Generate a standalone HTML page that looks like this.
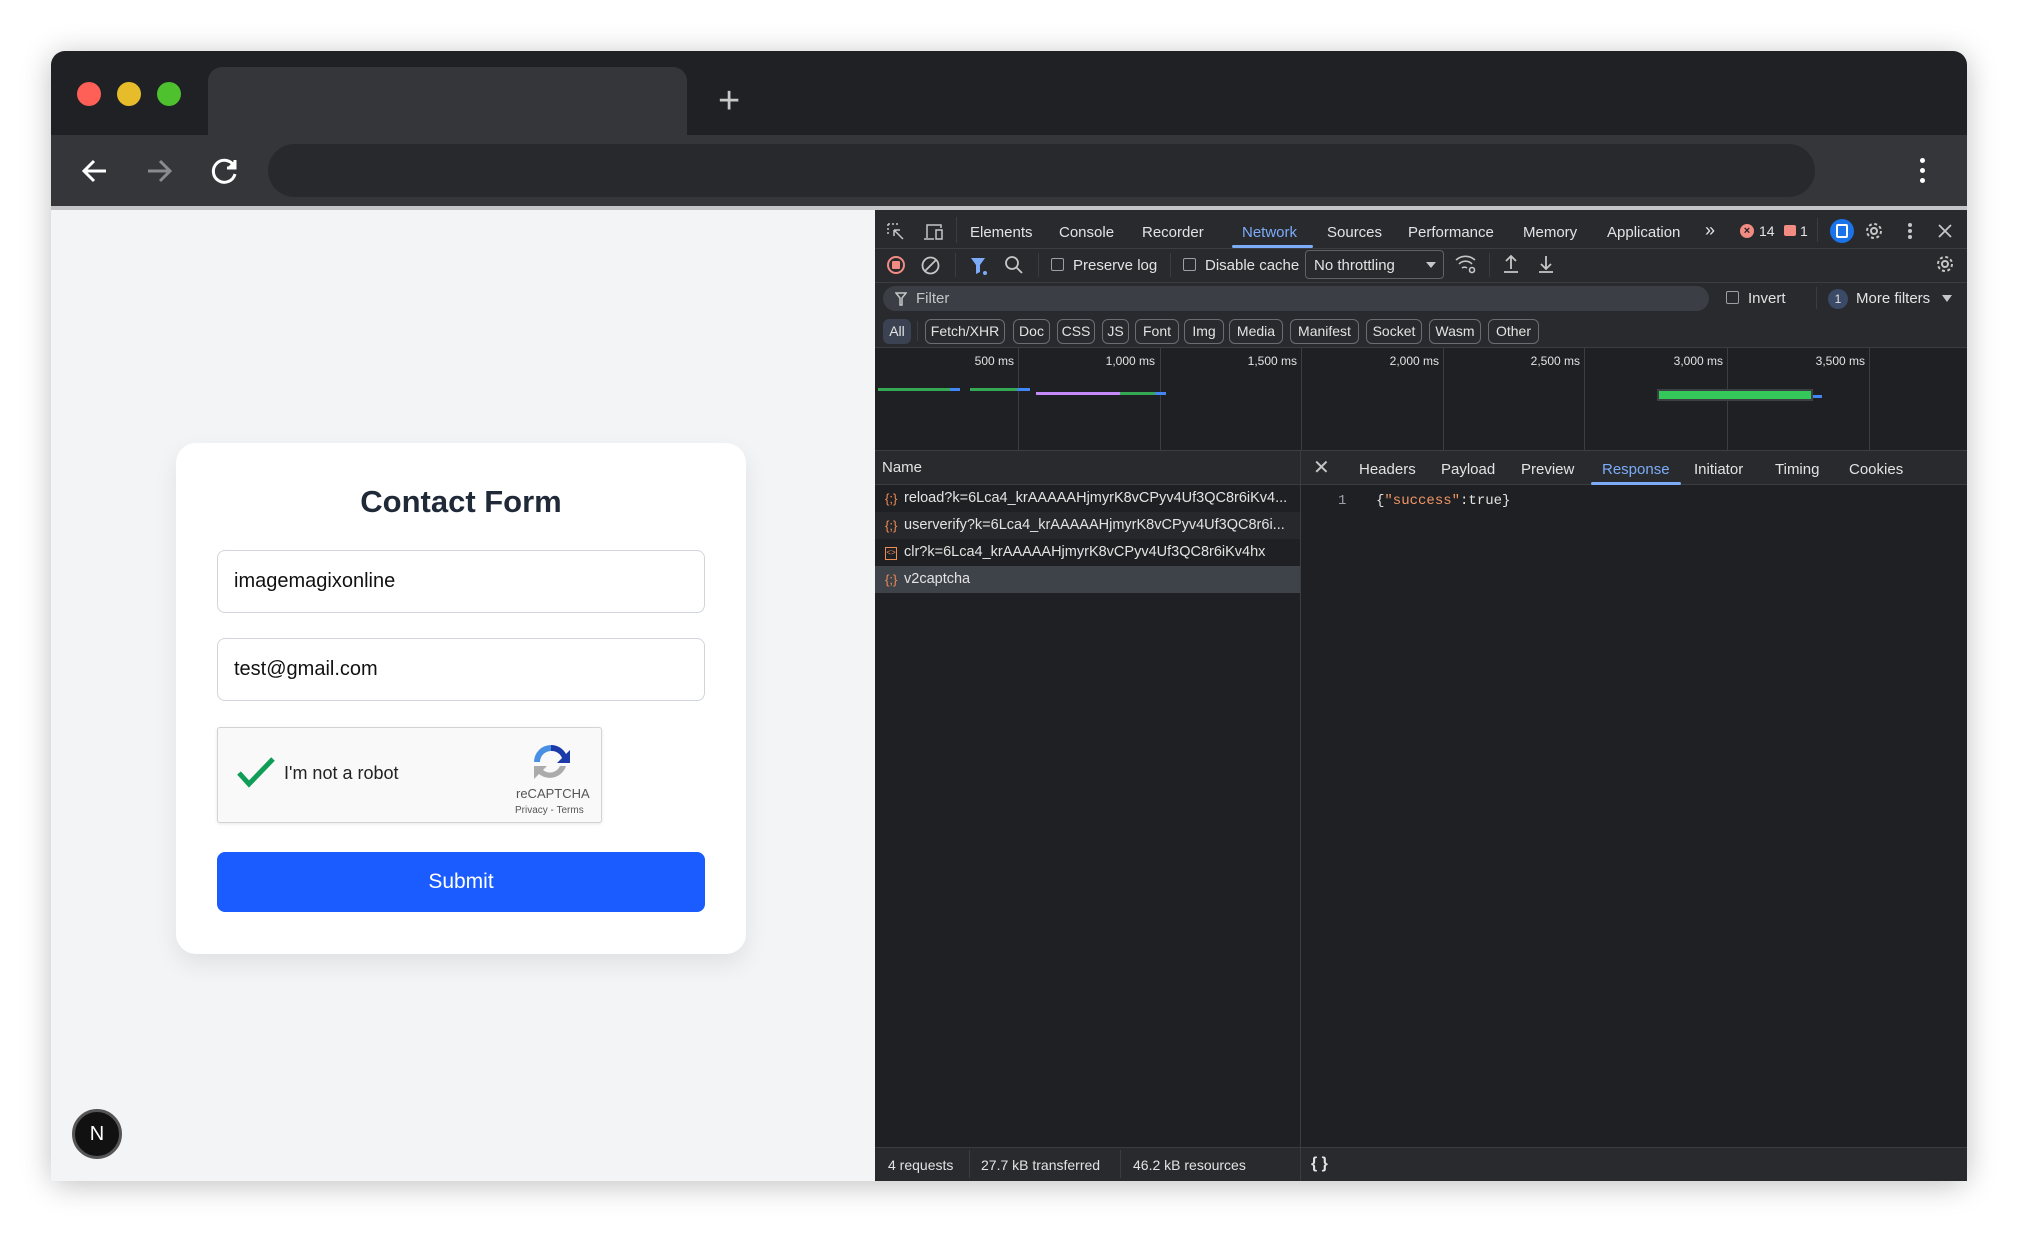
<!DOCTYPE html>
<html><head><meta charset="utf-8"><style>
*{box-sizing:border-box;margin:0;padding:0}
body{width:2018px;height:1233px;background:#fff;position:relative;overflow:hidden;font-family:"Liberation Sans",sans-serif}
.a{position:absolute}
.win{left:51px;top:51px;width:1916px;height:1130px;border-radius:14px;overflow:hidden;background:#202124;box-shadow:0 4px 30px rgba(0,0,0,.25)}
.dot{width:24px;height:24px;border-radius:50%;top:82px}
.dt{font-size:15px;color:#e3e3e3;white-space:nowrap}
.chip{top:319px;height:25px;border:1px solid #6a6d73;border-radius:6px;font-size:14px;color:#e3e3e3;text-align:center;line-height:23px}
.gl{top:347px;width:1px;height:103px;background:#3c3d41}
.tl{top:354px;font-size:12px;color:#e3e3e3;text-align:right;width:60px}
.row{left:875px;width:425px;height:27px;font-size:14.5px;color:#e3e3e3;line-height:27px;padding-left:29px;white-space:nowrap;overflow:hidden}
.ic{position:absolute;left:10px;top:0;color:#f28b54;font-size:13px}
.cb{width:13px;height:13px;border:1px solid #9aa0a6;border-radius:2px}
</style></head><body>
<div class="a win"></div>
<div class="a dot" style="left:77px;background:#fe5f57"></div>
<div class="a dot" style="left:117px;background:#e6bc2a"></div>
<div class="a dot" style="left:157px;background:#4dc22e"></div>
<div class="a" style="left:208px;top:67px;width:479px;height:70px;background:#35363a;border-radius:14px 14px 0 0"></div>
<div class="a" style="left:718px;top:82px;color:#c8c8c8;font-size:38px;line-height:38px">+</div>
<div class="a" style="left:51px;top:135px;width:1916px;height:73px;background:#35363a"></div>
<svg class="a" style="left:80px;top:156px" width="30" height="30" viewBox="0 0 30 30" fill="none" stroke="#fff" stroke-width="3"><path d="M26 15H4M14 5L4 15l10 10"/></svg>
<svg class="a" style="left:144px;top:156px" width="30" height="30" viewBox="0 0 30 30" fill="none" stroke="#8a8b8e" stroke-width="3"><path d="M4 15h22M16 5l10 10-10 10"/></svg>
<svg class="a" style="left:210px;top:156px" width="30" height="30" viewBox="0 0 30 30" fill="none" stroke="#fff" stroke-width="3"><path d="M24 10A11 11 0 1 0 25 18"/><path d="M25 4v8h-8" fill="#fff"/></svg>
<div class="a" style="left:268px;top:144px;width:1547px;height:53px;background:#28292c;border-radius:27px"></div>
<div class="a" style="left:1920px;top:158px;width:5px;height:5px;background:#fff;border-radius:50%;box-shadow:0 10px 0 #fff,0 20px 0 #fff"></div>
<div class="a" style="left:51px;top:206px;width:1916px;height:4px;background:#c4c4c6"></div>
<div class="a" style="left:51px;top:210px;width:824px;height:971px;background:#f3f4f6"></div>
<div class="a" style="left:176px;top:443px;width:570px;height:511px;background:#fff;border-radius:20px;box-shadow:0 10px 24px rgba(0,0,0,.08)"></div>
<div class="a" style="left:176px;top:484px;width:570px;text-align:center;font-size:31px;font-weight:bold;color:#1f2937">Contact Form</div>
<div class="a" style="left:217px;top:550px;width:488px;height:63px;border:1px solid #d1d5db;border-radius:8px;font-size:20px;color:#111;padding-left:16px;line-height:61px">imagemagixonline</div>
<div class="a" style="left:217px;top:638px;width:488px;height:63px;border:1px solid #d1d5db;border-radius:8px;font-size:20px;color:#111;padding-left:16px;line-height:61px">test@gmail.com</div>
<div class="a" style="left:217px;top:727px;width:385px;height:96px;border:1px solid #d3d3d3;border-radius:3px;background:#f9f9f9;box-shadow:0 1px 3px rgba(0,0,0,.1)"></div>
<svg class="a" style="left:236px;top:756px" width="40" height="32" viewBox="0 0 40 32" fill="none" stroke="#0f9d58" stroke-width="5"><path d="M3 17l10 11L37 3"/></svg>
<div class="a" style="left:284px;top:763px;font-size:18px;color:#222">I'm not a robot</div>
<svg class="a" style="left:531px;top:742px" width="40" height="40" viewBox="0 0 40 40"><path d="M20 3a17 17 0 0 1 15 9l4-4v13H26l5-5A11 11 0 0 0 20 9z" fill="#1c3aa9"/><path d="M20 3A17 17 0 0 0 3 20h6A11 11 0 0 1 20 9z" fill="#4a90e2"/><path d="M3 20v17l5-5a17 17 0 0 0 27-8h-6a11 11 0 0 1-17 4l4-4H3z" fill="#ababab"/></svg>
<div class="a" style="left:516px;top:786px;font-size:13px;color:#555">reCAPTCHA</div>
<div class="a" style="left:515px;top:805px;font-size:10px;color:#555">Privacy - Terms</div>
<div class="a" style="left:217px;top:852px;width:488px;height:60px;background:#1a5cff;border-radius:8px;color:#fff;font-size:21px;text-align:center;line-height:60px">Submit</div>
<div class="a" style="left:72px;top:1109px;width:50px;height:50px;border-radius:50%;background:#111;border:3px solid #555;color:#fff;font-size:20px;text-align:center;line-height:44px">N</div>
<div class="a" style="left:875px;top:210px;width:1092px;height:971px;background:#1f2023"></div>
<div class="a" style="left:875px;top:210px;width:1092px;height:137px;background:#282a2e"></div>
<div class="a" style="left:875px;top:248px;width:1092px;height:1px;background:#3c3d41"></div>
<div class="a" style="left:875px;top:282px;width:1092px;height:1px;background:#3c3d41"></div>
<div class="a" style="left:875px;top:347px;width:1092px;height:1px;background:#3c3d41"></div>
<svg class="a" style="left:886px;top:222px" width="20" height="20" viewBox="0 0 20 20" fill="none" stroke="#c4c7c5" stroke-width="1.5"><path d="M2 2h10M2 2v12" stroke-dasharray="2 2"/><path d="M8 8l9 9M8 8h6M8 8v6"/></svg>
<svg class="a" style="left:922px;top:222px" width="22" height="20" viewBox="0 0 22 20" fill="none" stroke="#c4c7c5" stroke-width="1.5"><path d="M5 16V3h14v3M2 17h10"/><rect x="14" y="8" width="6" height="9"/></svg>
<div class="a" style="left:956px;top:217px;width:1px;height:26px;background:#3c3d41"></div>
<div class="a dt" style="left:970px;top:224px">Elements</div>
<div class="a dt" style="left:1059px;top:224px">Console</div>
<div class="a dt" style="left:1142px;top:224px">Recorder</div>
<div class="a dt" style="left:1242px;top:224px;color:#7cacf8">Network</div>
<div class="a" style="left:1232px;top:245px;width:81px;height:3px;background:#7cacf8;border-radius:2px"></div>
<div class="a dt" style="left:1327px;top:224px">Sources</div>
<div class="a dt" style="left:1408px;top:224px">Performance</div>
<div class="a dt" style="left:1523px;top:224px">Memory</div>
<div class="a dt" style="left:1607px;top:224px">Application</div>
<div class="a dt" style="left:1705px;top:220px;font-size:18px">»</div>
<div class="a" style="left:1740px;top:224px;width:14px;height:14px;border-radius:50%;background:#f28b82;color:#1f2023;font-size:11px;text-align:center;line-height:14px;font-weight:bold">×</div>
<div class="a dt" style="left:1759px;top:223px;font-size:14px">14</div>
<div class="a" style="left:1784px;top:225px;width:12px;height:11px;background:#f28b82;border-radius:2px"></div>
<div class="a dt" style="left:1800px;top:223px;font-size:14px">1</div>
<div class="a" style="left:1817px;top:218px;width:1px;height:24px;background:#3c3d41"></div>
<div class="a" style="left:1830px;top:219px;width:24px;height:24px;border-radius:50%;background:#1a73e8"><div class="a" style="left:6px;top:5px;width:12px;height:14px;border:2px solid #fff;border-radius:2px"></div></div>
<svg class="a" style="left:1864px;top:221px" width="20" height="20" viewBox="0 0 20 20" fill="none" stroke="#c4c7c5" stroke-width="2"><circle cx="10" cy="10" r="3"/><circle cx="10" cy="10" r="7" stroke-dasharray="3 2.5"/></svg>
<div class="a" style="left:1908px;top:223px;width:4px;height:4px;background:#c4c7c5;border-radius:50%;box-shadow:0 6px 0 #c4c7c5,0 12px 0 #c4c7c5"></div>
<svg class="a" style="left:1937px;top:223px" width="16" height="16" viewBox="0 0 16 16" stroke="#c4c7c5" stroke-width="1.8"><path d="M2 2l12 12M14 2L2 14"/></svg>
<div class="a" style="left:887px;top:256px;width:18px;height:18px;border-radius:50%;border:2px solid #f28b82"><div class="a" style="left:3px;top:3px;width:8px;height:8px;background:#f28b82;border-radius:1px"></div></div>
<svg class="a" style="left:921px;top:256px" width="19" height="19" viewBox="0 0 19 19" fill="none" stroke="#c4c7c5" stroke-width="1.8"><circle cx="9.5" cy="9.5" r="8"/><path d="M4 15L15 4"/></svg>
<div class="a" style="left:955px;top:253px;width:1px;height:24px;background:#3c3d41"></div>
<svg class="a" style="left:969px;top:256px" width="20" height="20" viewBox="0 0 20 20"><path d="M2 2h14l-5 7v7l-4 2V9z" fill="#7cacf8"/><circle cx="16" cy="17" r="2" fill="#7cacf8"/></svg>
<svg class="a" style="left:1004px;top:255px" width="19" height="19" viewBox="0 0 19 19" fill="none" stroke="#c4c7c5" stroke-width="1.8"><circle cx="8" cy="8" r="6"/><path d="M12 12l6 6"/></svg>
<div class="a" style="left:1038px;top:253px;width:1px;height:24px;background:#3c3d41"></div>
<div class="a cb" style="left:1051px;top:258px"></div>
<div class="a dt" style="left:1073px;top:257px">Preserve log</div>
<div class="a" style="left:1170px;top:253px;width:1px;height:24px;background:#3c3d41"></div>
<div class="a cb" style="left:1183px;top:258px"></div>
<div class="a dt" style="left:1205px;top:257px">Disable cache</div>
<div class="a" style="left:1305px;top:250px;width:139px;height:29px;border:1px solid #5f6368;border-radius:4px"></div>
<div class="a dt" style="left:1314px;top:257px">No throttling</div>
<div class="a" style="left:1426px;top:262px;border-left:5px solid transparent;border-right:5px solid transparent;border-top:6px solid #c4c7c5"></div>
<svg class="a" style="left:1455px;top:254px" width="22" height="20" viewBox="0 0 22 20" fill="none" stroke="#c4c7c5" stroke-width="1.6"><path d="M1 6a14 14 0 0 1 19 0M4 10a9 9 0 0 1 13 0M7 14a4 4 0 0 1 5 0"/><circle cx="17" cy="16" r="2.5"/></svg>
<div class="a" style="left:1489px;top:253px;width:1px;height:24px;background:#3c3d41"></div>
<svg class="a" style="left:1502px;top:254px" width="18" height="20" viewBox="0 0 18 20" fill="none" stroke="#c4c7c5" stroke-width="1.8"><path d="M9 15V2M4 7l5-5 5 5M2 18h14"/></svg>
<svg class="a" style="left:1537px;top:254px" width="18" height="20" viewBox="0 0 18 20" fill="none" stroke="#c4c7c5" stroke-width="1.8"><path d="M9 2v13M4 10l5 5 5-5M2 18h14"/></svg>
<svg class="a" style="left:1935px;top:254px" width="20" height="20" viewBox="0 0 20 20" fill="none" stroke="#c4c7c5" stroke-width="2"><circle cx="10" cy="10" r="3"/><circle cx="10" cy="10" r="7" stroke-dasharray="3 2.5"/></svg>
<div class="a" style="left:883px;top:286px;width:826px;height:25px;background:#3b3e45;border-radius:13px"></div>
<svg class="a" style="left:895px;top:292px" width="12" height="14" viewBox="0 0 12 14" fill="none" stroke="#c4c7c5" stroke-width="1.5"><path d="M1 1h10L7 6v7H5V6z"/></svg>
<div class="a dt" style="left:916px;top:290px;color:#c4c7c5">Filter</div>
<div class="a cb" style="left:1726px;top:291px"></div>
<div class="a dt" style="left:1748px;top:290px">Invert</div>
<div class="a" style="left:1816px;top:287px;width:1px;height:22px;background:#3c3d41"></div>
<div class="a" style="left:1828px;top:289px;width:20px;height:20px;border-radius:50%;background:#3b4a66;color:#e3e3e3;font-size:12px;text-align:center;line-height:20px">1</div>
<div class="a dt" style="left:1856px;top:290px">More filters</div>
<div class="a" style="left:1942px;top:295px;border-left:5px solid transparent;border-right:5px solid transparent;border-top:7px solid #c4c7c5"></div>
<div class="a chip" style="left:883px;width:28px;background:#3b4252;border-color:#3b4252">All</div>
<div class="a" style="left:917px;top:321px;width:1px;height:20px;background:#3c3d41"></div>
<div class="a chip" style="left:925px;width:80px">Fetch/XHR</div>
<div class="a chip" style="left:1013px;width:37px">Doc</div>
<div class="a chip" style="left:1057px;width:38px">CSS</div>
<div class="a chip" style="left:1102px;width:27px">JS</div>
<div class="a chip" style="left:1135px;width:44px">Font</div>
<div class="a chip" style="left:1184px;width:40px">Img</div>
<div class="a chip" style="left:1229px;width:54px">Media</div>
<div class="a chip" style="left:1290px;width:69px">Manifest</div>
<div class="a chip" style="left:1366px;width:56px">Socket</div>
<div class="a chip" style="left:1429px;width:52px">Wasm</div>
<div class="a chip" style="left:1488px;width:51px">Other</div>
<div class="a gl" style="left:1018px"></div><div class="a gl" style="left:1160px"></div><div class="a gl" style="left:1301px"></div><div class="a gl" style="left:1443px"></div><div class="a gl" style="left:1584px"></div><div class="a gl" style="left:1727px"></div><div class="a gl" style="left:1869px"></div>
<div class="a tl" style="left:954px">500 ms</div><div class="a tl" style="left:1095px">1,000 ms</div><div class="a tl" style="left:1237px">1,500 ms</div><div class="a tl" style="left:1379px">2,000 ms</div><div class="a tl" style="left:1520px">2,500 ms</div><div class="a tl" style="left:1663px">3,000 ms</div><div class="a tl" style="left:1805px">3,500 ms</div>
<div class="a" style="left:878px;top:388px;width:72px;height:3px;background:#34a853"></div><div class="a" style="left:950px;top:388px;width:10px;height:3px;background:#4285f4"></div>
<div class="a" style="left:970px;top:388px;width:47px;height:3px;background:#34a853"></div><div class="a" style="left:1017px;top:388px;width:13px;height:3px;background:#4285f4"></div>
<div class="a" style="left:1036px;top:392px;width:84px;height:3px;background:#c58af9"></div><div class="a" style="left:1120px;top:392px;width:35px;height:3px;background:#34a853"></div><div class="a" style="left:1155px;top:392px;width:11px;height:3px;background:#4285f4"></div>
<div class="a" style="left:1657px;top:389px;width:156px;height:12px;background:#3c4043"></div>
<div class="a" style="left:1659px;top:391px;width:152px;height:8px;background:#34c759"></div>
<div class="a" style="left:1813px;top:395px;width:9px;height:3px;background:#4285f4"></div>
<div class="a" style="left:875px;top:450px;width:1092px;height:35px;background:#282a2e;border-top:1px solid #3c3d41;border-bottom:1px solid #3c3d41"></div>
<div class="a" style="left:1300px;top:450px;width:1px;height:731px;background:#3c3d41"></div>
<div class="a dt" style="left:882px;top:459px">Name</div>
<div class="a" style="left:1313px;top:455px;color:#c4c7c5;font-size:20px">✕</div>
<div class="a dt" style="left:1359px;top:461px">Headers</div>
<div class="a dt" style="left:1441px;top:461px">Payload</div>
<div class="a dt" style="left:1521px;top:461px">Preview</div>
<div class="a dt" style="left:1602px;top:461px;color:#7cacf8">Response</div>
<div class="a" style="left:1591px;top:482px;width:90px;height:3px;background:#7cacf8;border-radius:2px"></div>
<div class="a dt" style="left:1694px;top:461px">Initiator</div>
<div class="a dt" style="left:1775px;top:461px">Timing</div>
<div class="a dt" style="left:1849px;top:461px">Cookies</div>
<div class="a row" style="top:485px;background:#1f2023"><span class="ic">{;}</span>reload?k=6Lca4_krAAAAAHjmyrK8vCPyv4Uf3QC8r6iKv4...</div>
<div class="a row" style="top:512px;background:#26282c"><span class="ic">{;}</span>userverify?k=6Lca4_krAAAAAHjmyrK8vCPyv4Uf3QC8r6i...</div>
<div class="a row" style="top:539px;background:#1f2023"><span class="ic" style="border:1.5px solid #f28b54;width:12px;height:13px;top:8px;font-size:8px;line-height:10px;text-align:center">&lt;&gt;</span>clr?k=6Lca4_krAAAAAHjmyrK8vCPyv4Uf3QC8r6iKv4hx</div>
<div class="a row" style="top:566px;background:#3e4249"><span class="ic">{;}</span>v2captcha</div>
<div class="a" style="left:1338px;top:493px;font-family:'Liberation Mono',monospace;font-size:14px;color:#9aa0a6">1</div>
<div class="a" style="left:1376px;top:493px;font-family:'Liberation Mono',monospace;font-size:14px;color:#e3e3e3">{<span style="color:#f29766">"success"</span>:true}</div>
<div class="a" style="left:875px;top:1147px;width:1092px;height:34px;background:#282a2e;border-top:1px solid #3c3d41"></div>
<div class="a dt" style="left:888px;top:1157px;font-size:14px">4 requests</div>
<div class="a" style="left:969px;top:1150px;width:1px;height:28px;background:#3c3d41"></div>
<div class="a dt" style="left:981px;top:1157px;font-size:14px">27.7 kB transferred</div>
<div class="a" style="left:1120px;top:1150px;width:1px;height:28px;background:#3c3d41"></div>
<div class="a dt" style="left:1133px;top:1157px;font-size:14px">46.2 kB resources</div>
<div class="a" style="left:1300px;top:1147px;width:1px;height:34px;background:#3c3d41"></div>
<div class="a dt" style="left:1311px;top:1155px;font-size:16px;font-weight:bold">{ }</div>
</body></html>
